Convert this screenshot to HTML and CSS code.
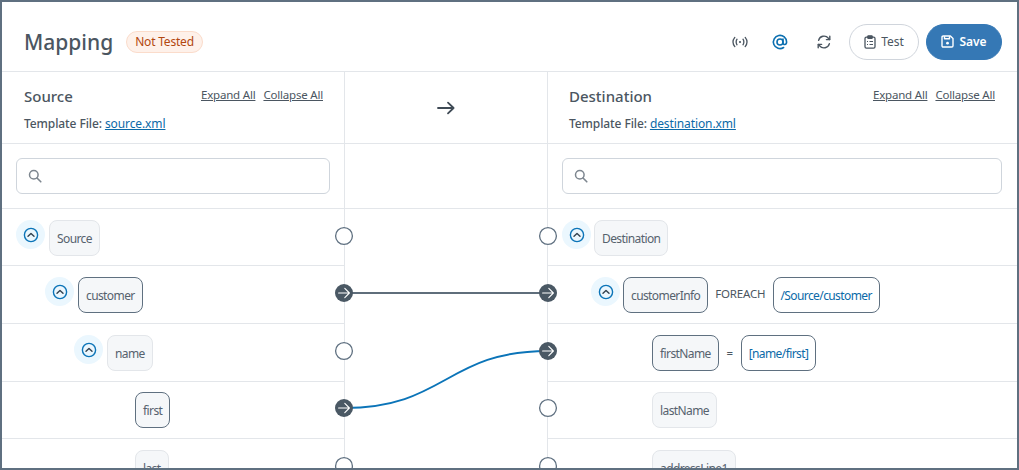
FILE: index.html
```html
<!DOCTYPE html>
<html lang="en">
<head>
<meta charset="utf-8">
<title>Mapping</title>
<link rel="stylesheet" href="styles.css">
</head>
<body>
<svg class="defs" width="0" height="0" aria-hidden="true">
  <symbol id="toggle" viewBox="0 0 16 16">
    <circle cx="8" cy="8" r="6.6" fill="none" stroke="currentColor" stroke-width="1.4"/>
    <path d="M5 9.3 8 6.4l3 2.9" fill="none" stroke="#33424f" stroke-width="1.4" stroke-linecap="round" stroke-linejoin="round"/>
  </symbol>
  <symbol id="search" viewBox="0 0 14 14">
    <circle cx="5.8" cy="5.8" r="4.3" fill="none" stroke="currentColor" stroke-width="1.5"/>
    <path d="M9 9l3.8 3.8" fill="none" stroke="currentColor" stroke-width="1.6" stroke-linecap="round"/>
  </symbol>
</svg>
<main class="app">
  <header class="topbar">
    <h1 class="page-title">Mapping</h1>
    <span class="badge">Not Tested</span>
    <div class="actions">
      <button class="icon-btn icon-signal" aria-label="Signal">
        <svg width="18" height="18" viewBox="0 0 18 18" fill="none" stroke="currentColor" stroke-width="1.3" stroke-linecap="round"><path d="M3.8 4.4c-2.2 2.8-2.2 6.4 0 9.2M6 6.2c-1.1 1.8-1.1 3.8 0 5.6M14.2 4.4c2.2 2.8 2.2 6.4 0 9.2M12 6.2c1.1 1.8 1.1 3.8 0 5.6"/><circle cx="9" cy="9" r="1.1" fill="currentColor" stroke="none"/></svg>
      </button>
      <button class="icon-btn icon-at" aria-label="At">
        <svg width="18" height="18" viewBox="0 0 18 18" fill="none" stroke="currentColor" stroke-width="1.6" stroke-linecap="round"><circle cx="9" cy="9" r="3"/><path d="M12 6v3.8c0 2.3 3.6 2.3 3.6-.8a6.6 6.6 0 1 0-3 5.5"/></svg>
      </button>
      <button class="icon-btn icon-refresh" aria-label="Refresh">
        <svg width="16" height="16" viewBox="0 0 16 16" fill="none" stroke="currentColor" stroke-width="1.4" stroke-linecap="round" stroke-linejoin="round"><path d="M2.6 6.4A5.6 5.6 0 0 1 12.4 4.2l1.2 1.3"/><path d="M13.8 2.2v3.4h-3.4"/><path d="M13.4 9.6A5.6 5.6 0 0 1 3.6 11.8l-1.2-1.3"/><path d="M2.2 13.8v-3.4h3.4"/></svg>
      </button>
      <button class="btn btn-test">
        <svg width="12" height="14" viewBox="0 0 12 14" fill="none" stroke="currentColor" stroke-width="1.3"><rect x="1" y="2.2" width="10" height="11" rx="1.4"/><rect x="3.8" y="0.8" width="4.4" height="2.6" rx=".6" fill="currentColor"/><path d="M3 6.5h1M5.5 6.5H9M3 9.5h1M5.5 9.5H9" stroke-width="1.1"/></svg>
        Test
      </button>
      <button class="btn btn-save">
        <svg width="13" height="13" viewBox="0 0 13 13" fill="none" stroke="currentColor" stroke-width="1.4" stroke-linejoin="round"><path d="M1 2.2C1 1.5 1.5 1 2.2 1h7.2L12 3.6v7.2c0 .7-.5 1.2-1.2 1.2H2.2C1.5 12 1 11.5 1 10.8z"/><path d="M3.5 1.2v2.6h5V1.2"/><circle cx="6.5" cy="8.2" r="1.4" fill="currentColor" stroke="none"/></svg>
        Save
      </button>
    </div>
  </header>

  <section class="mapper">
    <div class="col col-source">
      <div class="col-head">
        <div class="head-top">
          <h2 class="col-title">Source</h2>
          <div class="head-links"><a href="#">Expand All</a><a href="#">Collapse All</a></div>
        </div>
        <p class="template">Template File: <a href="#">source.xml</a></p>
      </div>
      <div class="search-cell">
        <div class="search"><svg class="search-icon" width="14" height="14"><use href="#search"/></svg></div>
      </div>
      <div class="rows">
        <div class="row"><button class="toggle" aria-label="Collapse"><svg width="16" height="16"><use href="#toggle"/></svg></button><span class="chip">Source</span></div>
        <div class="row lvl-1"><button class="toggle" aria-label="Collapse"><svg width="16" height="16"><use href="#toggle"/></svg></button><span class="chip chip-linked">customer</span></div>
        <div class="row lvl-2"><button class="toggle" aria-label="Collapse"><svg width="16" height="16"><use href="#toggle"/></svg></button><span class="chip">name</span></div>
        <div class="row lvl-3"><span class="chip chip-linked">first</span></div>
        <div class="row lvl-3"><span class="chip">last</span></div>
      </div>
    </div>

    <div class="col col-mid">
      <div class="col-head mid-head">
        <svg width="18" height="14" viewBox="0 0 18 14" fill="none" stroke="currentColor" stroke-width="1.8" stroke-linecap="round" stroke-linejoin="round"><path d="M1 7h15.6M11 1.6 16.6 7 11 12.4"/></svg>
      </div>
      <div class="search-cell"></div>
    </div>

    <div class="col col-dest">
      <div class="col-head">
        <div class="head-top">
          <h2 class="col-title">Destination</h2>
          <div class="head-links"><a href="#">Expand All</a><a href="#">Collapse All</a></div>
        </div>
        <p class="template">Template File: <a href="#">destination.xml</a></p>
      </div>
      <div class="search-cell">
        <div class="search"><svg class="search-icon" width="14" height="14"><use href="#search"/></svg></div>
      </div>
      <div class="rows">
        <div class="row"><button class="toggle" aria-label="Collapse"><svg width="16" height="16"><use href="#toggle"/></svg></button><span class="chip">Destination</span></div>
        <div class="row lvl-1"><button class="toggle" aria-label="Collapse"><svg width="16" height="16"><use href="#toggle"/></svg></button><span class="chip chip-linked">customerInfo</span><span class="op op-word">FOREACH</span><span class="chip chip-value">/Source/customer</span></div>
        <div class="row lvl-3"><span class="chip chip-linked">firstName</span><span class="op op-eq">=</span><span class="chip chip-value">[name/first]</span></div>
        <div class="row lvl-3"><span class="chip">lastName</span></div>
        <div class="row lvl-3"><span class="chip">addressLine1</span></div>
      </div>
    </div>

    <svg class="wires" width="1015" height="396" viewBox="2 72 1015 396" aria-hidden="true">
      <path class="wire-grey" d="M344 293H548"/>
      <path class="wire-blue" d="M344 408C446 408 446 351 548 351"/>
      <circle class="port" cx="344" cy="236" r="8.4"/>
      <circle class="port" cx="548" cy="236" r="8.4"/>
      <circle class="port" cx="344" cy="351" r="8.4"/>
      <circle class="port" cx="548" cy="408" r="8.4"/>
      <circle class="port" cx="344" cy="466" r="8.4"/>
      <circle class="port" cx="548" cy="466" r="8.4"/>
      <g class="port-on"><circle cx="344" cy="293" r="9"/><path d="M338.6 293h10.6M344.8 288.4l4.6 4.6-4.6 4.6"/></g>
      <g class="port-on"><circle cx="548" cy="293" r="9"/><path d="M542.6 293h10.6M548.8 288.4l4.6 4.6-4.6 4.6"/></g>
      <g class="port-on"><circle cx="344" cy="408" r="9"/><path d="M338.6 408h10.6M344.8 403.4l4.6 4.6-4.6 4.6"/></g>
      <g class="port-on"><circle cx="548" cy="351" r="9"/><path d="M542.6 351h10.6M548.8 346.4l4.6 4.6-4.6 4.6"/></g>
    </svg>
  </section>
</main>
</body>
</html>
```
FILE: styles.css
```css
* { box-sizing: border-box; }
html, body { margin: 0; height: 470px; overflow: hidden; background: #fff; }
body { font-family: "Noto Sans", "Open Sans", sans-serif; color: #4b5661; }
.defs { position: absolute; }
button { font-family: inherit; }

.app {
  height: 470px;
  border: 2px solid #5f7080;
  display: flex;
  flex-direction: column;
  overflow: hidden;
}

.topbar {
  flex: none;
  height: 70px;
  display: flex;
  align-items: center;
  padding: 10px 15px 0 22px;
  border-bottom: 1px solid #e3e6ea;
}
.page-title { margin: 0; font-size: 21px; font-weight: 500; color: #4b5661; line-height: 30px; }
.badge {
  margin-left: 13px;
  height: 22px;
  padding: 0 8px;
  display: flex;
  align-items: center;
  border: 1px solid #fbdccb;
  border-radius: 11px;
  background: #fef1ea;
  color: #b2470f;
  font-size: 12px;
  letter-spacing: -0.2px;
}
.actions { margin-left: auto; display: flex; align-items: center; }
.icon-btn {
  width: 18px;
  height: 18px;
  padding: 0;
  border: 0;
  background: none;
  display: flex;
  align-items: center;
  justify-content: center;
  color: #4b5661;
}
.icon-signal { margin-right: 22px; }
.icon-at { margin-right: 26px; color: #0b6fb0; }
.icon-refresh { margin-right: 16px; }
.btn {
  height: 36px;
  border-radius: 18px;
  display: flex;
  align-items: center;
  justify-content: center;
  gap: 5px;
  font-size: 12px;
}
.btn-test { width: 70px; background: #fff; border: 1px solid #d0d5dc; color: #4b5661; }
.btn-save { width: 76px; margin-left: 7px; background: #3578b5; border: 1px solid #3578b5; color: #fff; font-weight: 600; }

.mapper {
  flex: 1;
  position: relative;
  display: grid;
  grid-template-columns: 343px 203px 1fr;
  min-height: 0;
}
.col { min-width: 0; }
.col-source, .col-mid { border-right: 1px solid #e3e6ea; }

.col-head {
  height: 72px;
  padding: 13px 21px 0 22px;
  border-bottom: 1px solid #e3e6ea;
}
.col-dest .col-head { padding: 13px 22px 0 21px; }
.col-mid .mid-head { display: flex; align-items: center; justify-content: center; padding: 0; color: #3f4a55; }
.head-top { display: flex; justify-content: space-between; align-items: flex-start; }
.col-title { margin: 0; font-size: 15px; font-weight: 500; line-height: 22px; color: #4b5661; }
.head-links { display: flex; gap: 8px; font-size: 11.5px; line-height: 16px; margin-top: 2px; letter-spacing: -0.2px; }
.head-links a { color: #4b5661; text-decoration: underline; }
.template { margin: 8px 0 0; font-size: 12px; font-weight: 500; line-height: 18px; color: #4b5661; letter-spacing: -0.1px; }
.template a { font-weight: 400; color: #0b6aa8; text-decoration: underline; }

.search-cell { height: 65px; padding: 14px 14px 0; border-bottom: 1px solid #e3e6ea; }
.col-dest .search-cell { padding-right: 15px; }
.search {
  height: 36px;
  border: 1px solid #cfd5dc;
  border-radius: 6px;
  display: flex;
  align-items: center;
  padding-left: 11px;
  color: #7d868f;
}

.row {
  height: 57px;
  padding: 11px 0 0 14px;
  display: flex;
  align-items: flex-start;
  border-bottom: 1px solid #e3e6ea;
}
.row:nth-child(2), .row:nth-child(3) { height: 58px; }
.row:nth-child(4) { padding-top: 10px; }
.lvl-1 { padding-left: 43px; }
.lvl-2 { padding-left: 72px; }
.lvl-3 { padding-left: 133px; }
.col-dest .lvl-3 { padding-left: 104px; }
.toggle {
  flex: none;
  width: 29px;
  height: 29px;
  margin-right: 4px;
  padding: 0;
  border: 0;
  border-radius: 50%;
  background: #ebf7fe;
  color: #0b74b8;
  display: flex;
  align-items: center;
  justify-content: center;
}
.col-dest .toggle { margin-right: 3px; }
.chip {
  height: 36px;
  padding: 0 7px;
  display: flex;
  align-items: center;
  border: 1px solid #e3e6ea;
  border-radius: 8px;
  background: #f5f7f9;
  font-size: 12px;
  letter-spacing: -0.6px;
  color: #56626e;
  white-space: nowrap;
}
.chip-linked { border-color: #5f7080; }
.chip-value { background: #fff; border-color: #5f7080; color: #0b6aa8; }
.op { font-size: 11.5px; line-height: 36px; color: #4b5661; }
.op-word { margin: 0 7px; line-height: 34px; letter-spacing: -0.15px; }
.op-eq { width: 22px; text-align: center; }

.wires { position: absolute; left: 0; top: 0; pointer-events: none; }
.wire-grey { fill: none; stroke: #5f6e7b; stroke-width: 2; }
.wire-blue { fill: none; stroke: #0b74b8; stroke-width: 2; }
.port { fill: #fff; stroke: #5f7080; stroke-width: 1.3; }
.port-on circle { fill: #4a5864; }
.port-on path { fill: none; stroke: #fff; stroke-width: 1.1; stroke-linecap: round; stroke-linejoin: round; }
```
